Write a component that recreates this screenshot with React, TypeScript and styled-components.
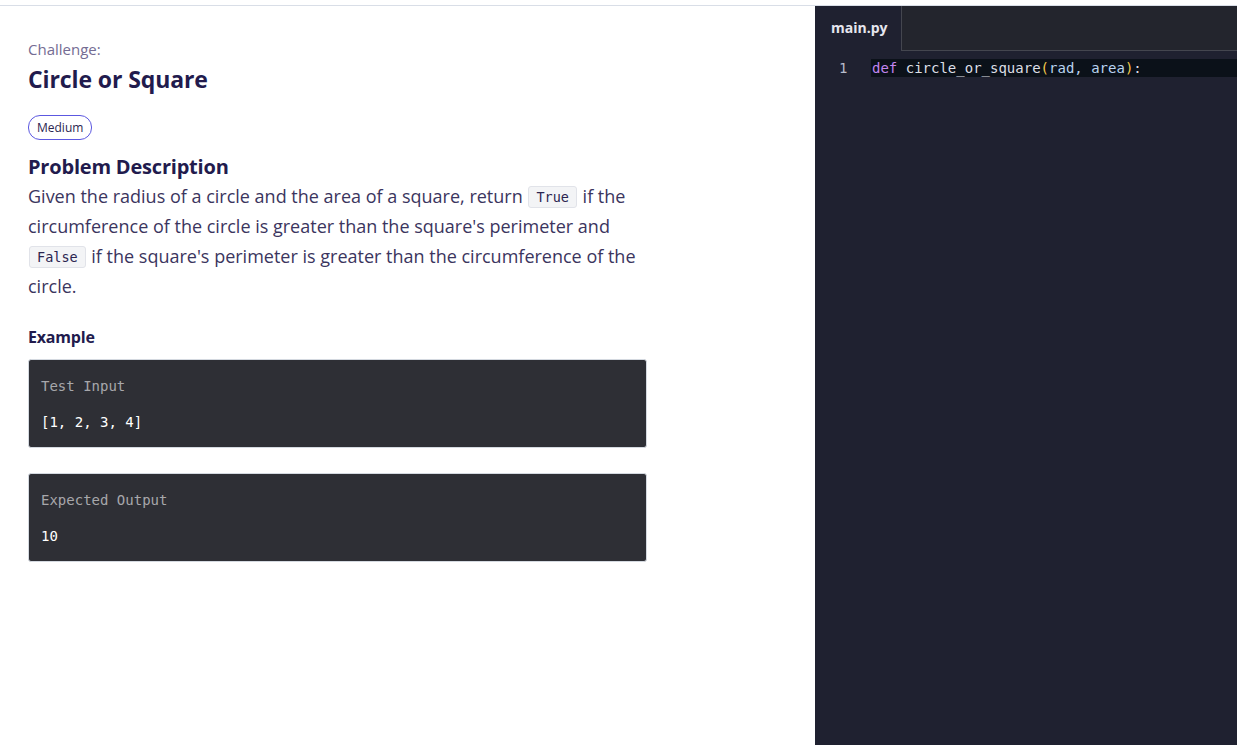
import styled, { createGlobalStyle } from "styled-components";

const GlobalStyle = createGlobalStyle`
  html, body {
    margin: 0;
    padding: 0;
    background: #ffffff;
  }
  body {
    font-family: "Open Sans", "Noto Sans", sans-serif;
  }
`;

const App: React.FC = () => {
  return (
    <>
      <GlobalStyle />
      <Page>
        <LeftPane>
          <Eyebrow>Challenge:</Eyebrow>
          <Title>Circle or Square</Title>
          <Badge>Medium</Badge>
          <SectionTitle>Problem Description</SectionTitle>
          <Description>
            Given the radius of a circle and the area of a square, return{" "}
            <InlineCode>True</InlineCode> if the circumference of the circle is
            greater than the square's perimeter and{" "}
            <InlineCode>False</InlineCode> if the square's perimeter is greater
            than the circumference of the circle.
          </Description>
          <ExampleTitle>Example</ExampleTitle>
          <CodeBox>
            <CodeLabel>Test Input</CodeLabel>
            <CodeValue>[1, 2, 3, 4]</CodeValue>
          </CodeBox>
          <CodeBox>
            <CodeLabel>Expected Output</CodeLabel>
            <CodeValue>10</CodeValue>
          </CodeBox>
        </LeftPane>
        <EditorPane>
          <TabBar>
            <Tab>main.py</Tab>
            <TabFiller />
          </TabBar>
          <Lines>
            <Line>
              <LineNumber>1</LineNumber>
              <LineCode $active>
                <Keyword>def</Keyword> circle_or_square<Paren>(</Paren>
                <Param>rad, area</Param>
                <Paren>)</Paren>:
              </LineCode>
            </Line>
          </Lines>
        </EditorPane>
      </Page>
    </>
  );
};

export default App;

const Page = styled.div`
  margin-top: 5px;
  border-top: 1px solid #d9dee7;
  display: flex;
  height: 739px;
  overflow: hidden;
`;

const LeftPane = styled.div`
  width: 815px;
  flex-shrink: 0;
  box-sizing: border-box;
  padding: 33px 0 0 28px;
`;

const Eyebrow = styled.div`
  font-size: 15px;
  line-height: 20px;
  color: #746c93;
`;

const Title = styled.h1`
  margin: 4px 0 0;
  font-size: 23px;
  line-height: 32px;
  font-weight: 700;
  letter-spacing: -0.1px;
  color: #221b4d;
`;

const Badge = styled.span`
  display: inline-block;
  margin-top: 20px;
  padding: 0 8px;
  height: 25px;
  line-height: 23px;
  box-sizing: border-box;
  border: 1px solid #5c58e0;
  border-radius: 12px;
  font-size: 12px;
  color: #2b2550;
`;

const SectionTitle = styled.h2`
  margin: 13px 0 0;
  font-size: 20px;
  line-height: 28px;
  font-weight: 700;
  letter-spacing: -0.2px;
  color: #221b4d;
`;

const Description = styled.p`
  margin: 0;
  width: 620px;
  font-size: 18px;
  line-height: 30px;
  color: #3b355e;
`;

const InlineCode = styled.code`
  display: inline-block;
  height: 22px;
  box-sizing: border-box;
  margin: 0 1px;
  padding: 0 7px;
  font-family: "DejaVu Sans Mono", monospace;
  font-size: 13.5px;
  line-height: 20px;
  vertical-align: 1px;
  color: #2b2550;
  background: #f3f4f6;
  border: 1px solid #e1e3e9;
  border-radius: 3px;
`;

const ExampleTitle = styled.h3`
  margin: 25px 0 0;
  font-size: 16px;
  line-height: 22px;
  font-weight: 700;
  letter-spacing: -0.2px;
  color: #221b4d;
`;

const CodeBox = styled.div`
  width: 619px;
  height: 89px;
  box-sizing: border-box;
  margin-top: 11px;
  margin-bottom: 25px;
  padding: 17px 12px 0;
  background: #2e2f35;
  border: 1px solid #d4d9e0;
  border-radius: 3px;
  font-family: "DejaVu Sans Mono", monospace;
  font-size: 14px;

  & + & {
    margin-top: 0;
  }
`;

const CodeLabel = styled.div`
  color: #a7a7ab;
  line-height: 18px;
`;

const CodeValue = styled.div`
  margin-top: 18px;
  color: #ffffff;
  line-height: 18px;
`;

const EditorPane = styled.div`
  flex: 1;
  background: #1f2130;
  display: flex;
  flex-direction: column;
`;

const TabBar = styled.div`
  display: flex;
  height: 45px;
`;

const Tab = styled.div`
  width: 86px;
  box-sizing: border-box;
  padding: 12px 0 0 16px;
  font-size: 14px;
  font-weight: 700;
  color: #e6e6ee;
`;

const TabFiller = styled.div`
  flex: 1;
  background: #23252d;
  border-left: 1px solid #44464f;
  border-bottom: 1px solid #44464f;
`;

const Lines = styled.div`
  padding-top: 8px;
  font-family: "DejaVu Sans Mono", monospace;
  font-size: 14px;
`;

const Line = styled.div`
  display: flex;
  height: 18px;
  line-height: 18px;
`;

const LineNumber = styled.span`
  width: 56px;
  box-sizing: border-box;
  padding-left: 24px;
  color: #b8bccc;
`;

const LineCode = styled.span<{ $active?: boolean }>`
  flex: 1;
  padding-left: 1px;
  background: ${(p) => (p.$active ? "#0b1119" : "transparent")};
  color: #dcdfe6;
  white-space: pre;
`;

const Keyword = styled.span`
  color: #c285f0;
`;

const Paren = styled.span`
  color: #f2c94c;
`;

const Param = styled.span`
  color: #b9d3f0;
`;
